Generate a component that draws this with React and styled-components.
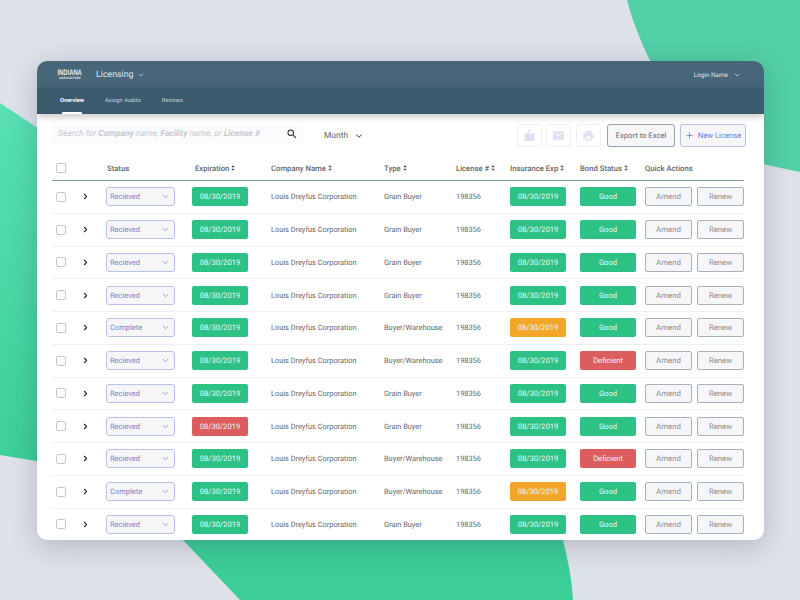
import React from 'react'
import styled, { createGlobalStyle } from 'styled-components'
import { ChevronDown, ChevronRight, Plus } from 'lucide-react'
import { MdSearch, MdEmail, MdPrint } from 'react-icons/md'

const GlobalStyle = createGlobalStyle`
    html, body {
        margin: 0;
        padding: 0;
    }
    body {
        width: 800px;
        height: 600px;
        overflow: hidden;
        background: #dfe2ea;
        font-family: Roboto, "Liberation Sans", sans-serif;
        text-rendering: geometricPrecision;
    }
`

const Page = styled.div`
    position: relative;
    box-sizing: border-box;
    width: 800px;
    height: 600px;
    padding: 61px 36px 60px 37px;
    overflow: hidden;
`

const Blobs = styled.svg`
    position: absolute;
    top: 0;
    left: 0;
`

const Card = styled.div`
    position: relative;
    height: 479px;
    background: #ffffff;
    border-radius: 10px;
    overflow: hidden;
    box-shadow: 0 6px 28px #2a2f4a40;
`

const TopBar = styled.div`
    display: flex;
    align-items: center;
    height: 27px;
    padding: 0 23px 0 20px;
    background: #47667a;
    color: #e6ecf0;
`

const Logo = styled.div`
    display: flex;
    flex-direction: column;
    align-items: center;
    width: 26px;
    margin-right: 13px;
    color: #e8edf0;
`

const LogoName = styled.span`
    font-family: "Liberation Sans", sans-serif;
    font-weight: 700;
    font-size: 8px;
    line-height: 8px;
    transform: scaleX(0.73);
`

const LogoSub = styled.span`
    font-size: 3px;
    line-height: 3px;
    font-weight: 700;
    letter-spacing: 0.2px;
    white-space: nowrap;
`

const MenuButton = styled.div`
    display: flex;
    align-items: center;
    gap: ${(p) => p.$gap}px;
    font-size: ${(p) => p.$size}px;
    color: #dfe6ea;
`

const Spacer = styled.div`
    flex-grow: 1;
`

const NavBar = styled.div`
    position: relative;
    display: flex;
    height: 26px;
    padding-left: 23px;
    gap: 21px;
    background: #3a5a6e;
    box-shadow: 0 3px 7px #00000038;
`

const NavItem = styled.div`
    position: relative;
    display: flex;
    align-items: center;
    font-size: 5.8px;
    font-weight: ${(p) => (p.$active ? 700 : 400)};
    color: ${(p) => (p.$active ? '#ffffff' : '#c9d5dc')};

    &::after {
        content: '';
        display: ${(p) => (p.$active ? 'block' : 'none')};
        position: absolute;
        left: 2px;
        right: 2px;
        bottom: 0;
        height: 2px;
        background: #ffffff;
    }
`

const Toolbar = styled.div`
    display: flex;
    align-items: center;
    height: 23px;
    margin-top: 10px;
    padding: 0 18px 0 14px;
`

const SearchBox = styled.div`
    display: flex;
    align-items: center;
    justify-content: space-between;
    box-sizing: border-box;
    width: 253px;
    height: 20px;
    margin-top: -3px;
    padding: 0 6px 0 7px;
    border-radius: 3px;
    background: #fafbfc;
    color: #c6c9d0;
    font-size: 8.6px;
    font-style: italic;
    white-space: nowrap;

    b {
        font-weight: 700;
    }
`

const MonthPicker = styled.div`
    display: flex;
    align-items: center;
    gap: 6px;
    margin-left: 20px;
    font-size: 8.4px;
    color: #5e6168;
`

const IconButton = styled.div`
    display: flex;
    align-items: center;
    justify-content: center;
    box-sizing: border-box;
    width: 25px;
    height: 23px;
    margin-right: ${(p) => p.$gap}px;
    border: 1px solid #eef0f8;
    border-radius: 3px;
    color: #dde1f2;
`

const ActionButton = styled.div`
    display: flex;
    align-items: center;
    justify-content: center;
    gap: 4px;
    box-sizing: border-box;
    width: ${(p) => p.$width}px;
    height: 23px;
    margin-left: ${(p) => p.$left}px;
    border: 1px solid ${(p) => (p.$primary ? '#b9c3e6' : '#93a4b0')};
    border-radius: 3px;
    background: #f6f6f8;
    font-size: 7.7px;
    color: ${(p) => (p.$primary ? '#6d7cbc' : '#5f6b75')};
`

const Table = styled.div`
    margin: 9px 20px 0 15px;
`

const columns = '26px 28px 86px 79px 113px 72px 54px 70px 65px 99px'

const HeaderRow = styled.div`
    display: grid;
    grid-template-columns: ${columns};
    align-items: center;
    height: 24px;
    border-bottom: 1.5px solid #7f98a8;
    font-size: 7.7px;
    font-weight: 500;
    color: #62666c;
`

const Row = styled.div`
    display: grid;
    grid-template-columns: ${columns};
    align-items: center;
    box-sizing: border-box;
    height: 32.75px;
    border-bottom: 1px solid #eeeff2;
    font-size: 7.4px;
    color: #63676c;
`

const HeaderCell = styled.div`
    display: flex;
    align-items: center;
    gap: 2px;
    padding-left: ${(p) => p.$indent || 0}px;
    white-space: nowrap;
`

const CheckBox = styled.div`
    box-sizing: border-box;
    width: 10px;
    height: 10px;
    margin-left: 4px;
    border: 1px solid #c6c8cd;
    border-radius: 2px;
    background: #fdfdfd;
`

const Expander = styled.div`
    display: flex;
    color: #2c2e33;
    margin-left: 3px;
`

const StatusSelect = styled.div`
    display: flex;
    align-items: center;
    justify-content: space-between;
    box-sizing: border-box;
    width: 69px;
    height: 19px;
    padding: 0 4px 0 3px;
    border: 1px solid #b7c2e8;
    border-radius: 3px;
    background: #f6f6f8;
    font-size: 7.5px;
    color: #7484c6;
`

const tones = {
    good: '#2cc285',
    warn: '#f2a62a',
    bad: '#dd5d5e',
}

const Pill = styled.div`
    display: flex;
    align-items: center;
    justify-content: center;
    box-sizing: border-box;
    width: 56px;
    height: 19px;
    border-radius: 2px;
    background: ${(p) => tones[p.$tone]};
    color: #eaf8f2;
    font-size: 7.6px;
`

const QuickActions = styled.div`
    display: flex;
    gap: 5px;
`

const QuickButton = styled.div`
    display: flex;
    align-items: center;
    justify-content: center;
    box-sizing: border-box;
    width: 47px;
    height: 19px;
    border: 1px solid #a3b2bd;
    border-radius: 2px;
    background: #f6f6f8;
    color: #888b90;
    font-size: 7.8px;
`

function SortIcon() {
    return (
        <svg width="4" height="6" viewBox="0 0 5 7" fill="#3f4347">
            <path d="M2.5 0 L4.6 2.6 H0.4 Z" />
            <path d="M2.5 7 L4.6 4.4 H0.4 Z" />
        </svg>
    )
}

function BoxIcon() {
    return (
        <svg width="13" height="13" viewBox="0 0 13 13" fill="currentColor">
            <path d="M1.5 4.5 H5 V2.6 C5 1.4 5.8 0.8 7 0.8 H9 V2 H7 C6.5 2 6.2 2.2 6.2 2.7 V4.5 H11.5 V12 H1.5 Z" />
        </svg>
    )
}

const rows = [
    { status: 'Recieved', type: 'Grain Buyer' },
    { status: 'Recieved', type: 'Grain Buyer' },
    { status: 'Recieved', type: 'Grain Buyer' },
    { status: 'Recieved', type: 'Grain Buyer' },
    { status: 'Complete', type: 'Buyer/Warehouse', insurance: 'warn' },
    { status: 'Recieved', type: 'Buyer/Warehouse', bond: 'bad' },
    { status: 'Recieved', type: 'Grain Buyer' },
    { status: 'Recieved', type: 'Grain Buyer', expiration: 'bad' },
    { status: 'Recieved', type: 'Buyer/Warehouse', bond: 'bad' },
    { status: 'Complete', type: 'Buyer/Warehouse', insurance: 'warn' },
    { status: 'Recieved', type: 'Grain Buyer' },
]

const sortableColumns = ['Expiration', 'Company Name', 'Type', 'License #', 'Insurance Exp', 'Bond Status']

function App() {
    return (
        <Page>
            <GlobalStyle />
            <Blobs width="800" height="600" viewBox="0 0 800 600">
                <defs>
                    <linearGradient id="leftBlob" x1="0" y1="0" x2="0" y2="1">
                        <stop offset="0" stopColor="#58e0b3" />
                        <stop offset="1" stopColor="#3ccf97" />
                    </linearGradient>
                </defs>
                <path d="M627 0 C640 50 675 120 725 150 C750 163 775 167 800 172 V0 Z" fill="#52d0a6" />
                <path d="M0 103 L60 143 V465 L0 455 Z" fill="url(#leftBlob)" />
                <path d="M183 540 L240 600 H573 C572 580 568 560 563 540 Z" fill="#3bce96" />
            </Blobs>
            <Card>
                <TopBar>
                    <Logo>
                        <LogoName>INDIANA</LogoName>
                        <LogoSub>AGRICULTURE</LogoSub>
                    </Logo>
                    <MenuButton $size={8.8} $gap={4}>
                        Licensing <ChevronDown size={8} strokeWidth={2} />
                    </MenuButton>
                    <Spacer />
                    <MenuButton $size={6.4} $gap={5}>
                        Login Name <ChevronDown size={8} strokeWidth={2} />
                    </MenuButton>
                </TopBar>
                <NavBar>
                    <NavItem $active>Overview</NavItem>
                    <NavItem>Assign Audits</NavItem>
                    <NavItem>Reviews</NavItem>
                </NavBar>
                <Toolbar>
                    <SearchBox>
                        <span>
                            Search for <b>Company</b> name, <b>Facility</b> name, or <b>License #</b>
                        </span>
                        <MdSearch size={12} color="#26282c" />
                    </SearchBox>
                    <MonthPicker>
                        Month <ChevronDown size={10} strokeWidth={2.4} color="#3a3d42" />
                    </MonthPicker>
                    <Spacer />
                    <IconButton $gap={4}><BoxIcon /></IconButton>
                    <IconButton $gap={5}><MdEmail size={13} /></IconButton>
                    <IconButton $gap={0}><MdPrint size={13} /></IconButton>
                    <ActionButton $width={68} $left={6}>Export to Excel</ActionButton>
                    <ActionButton $width={66} $left={5} $primary>
                        <Plus size={9} strokeWidth={2} /> New License
                    </ActionButton>
                </Toolbar>
                <Table>
                    <HeaderRow>
                        <CheckBox />
                        <span />
                        <HeaderCell $indent={1}>Status</HeaderCell>
                        {sortableColumns.map((name) => (
                            <HeaderCell key={name} $indent={name === 'Expiration' ? 3 : 0}>
                                {name} <SortIcon />
                            </HeaderCell>
                        ))}
                        <HeaderCell>Quick Actions</HeaderCell>
                    </HeaderRow>
                    {rows.map((row, i) => (
                        <Row key={i}>
                            <CheckBox />
                            <Expander>
                                <ChevronRight size={9} strokeWidth={3} />
                            </Expander>
                            <StatusSelect>
                                {row.status}
                                <ChevronDown size={9} strokeWidth={2} />
                            </StatusSelect>
                            <Pill $tone={row.expiration || 'good'}>08/30/2019</Pill>
                            <span>Louis Dreyfus Corporation</span>
                            <span>{row.type}</span>
                            <span>198356</span>
                            <Pill $tone={row.insurance || 'good'}>08/30/2019</Pill>
                            <Pill $tone={row.bond || 'good'}>
                                {row.bond === 'bad' ? 'Deficient' : 'Good'}
                            </Pill>
                            <QuickActions>
                                <QuickButton>Amend</QuickButton>
                                <QuickButton>Renew</QuickButton>
                            </QuickActions>
                        </Row>
                    ))}
                </Table>
            </Card>
        </Page>
    )
}

export default App
